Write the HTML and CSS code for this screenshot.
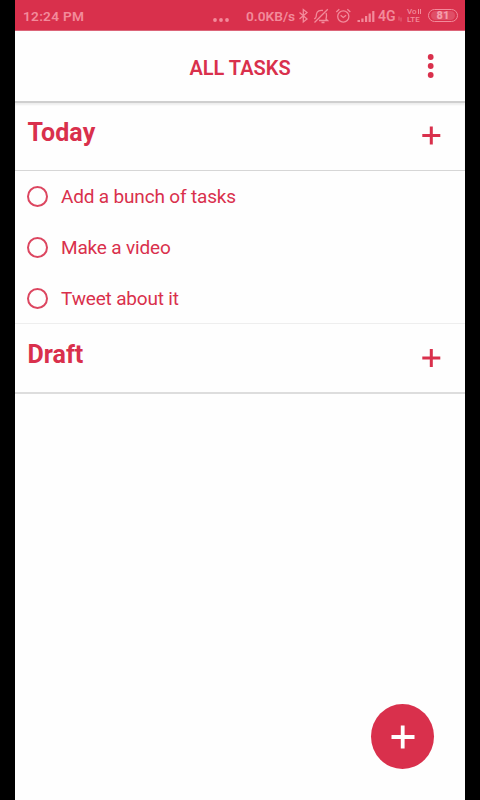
FILE: index.html
```html
<!DOCTYPE html>
<html lang="en">
<head>
<meta charset="utf-8">
<meta name="viewport" content="width=device-width, initial-scale=1">
<title>All Tasks</title>
<link rel="stylesheet" href="styles.css">
</head>
<body>
<div class="phone">
  <div class="status">
    <span class="time">12:24 PM</span>
    <svg class="dots" width="16" height="4" viewBox="0 0 16 4" fill="currentColor"><circle cx="2" cy="2" r="1.9"/><circle cx="8" cy="2" r="1.9"/><circle cx="14" cy="2" r="1.9"/></svg>
    <span class="speed">0.0KB/s</span>
    <svg width="11" height="16" viewBox="0 0 11 16" fill="none" stroke="currentColor" stroke-width="1.3"><path d="M1.500 4.500 9 11 5.300 14V1.500L9 4.500 1.500 11"/></svg>
    <svg class="bell" width="16" height="16" viewBox="0 0 16 16" fill="none" stroke="currentColor" stroke-width="1.3"><path d="M1.500 14.500 14.800 1.200M3 9.500l.5-3.500C4 3 7 1.800 10 2.500M3 9.500 1.300 11M13 5c1 2 .5 4 0 6l1.500 1.500H6M8.500 14.500h3"/></svg>
    <svg class="alarm" width="16" height="16" viewBox="0 0 16 16" fill="none" stroke="currentColor" stroke-width="1.3"><circle cx="8.300" cy="8.500" r="5.600"/><path d="M1.300 4 4.300 1.300M12.300 1.300 15.300 4M5.600 7.300 8.300 9.500l2.800-2.200"/></svg>
    <svg class="signal" width="18" height="13" viewBox="0 0 18 13" fill="currentColor"><path d="M.5 10H3v2H.5ZM4.300 8.500h2.200V12H4.300ZM8 6h2.200v6H8ZM11.600 3.500h2.200V12h-2.200ZM15.200 1h2.200v11h-2.200Z"/></svg>
    <span class="net">4G</span>
    <svg class="data" width="4" height="6" viewBox="0 0 4 6" fill="none" stroke="currentColor" stroke-width="1"><path d="M1 .5v4M3 1.500v4"/></svg>
    <span class="volte"><span class="vo">Vo<i></i><i></i></span><span>LTE</span></span>
    <span class="battery"><b>81</b></span>
  </div>
  <header class="header">
    <h1>ALL TASKS</h1>
    <svg class="menu" width="8" height="24" viewBox="0 0 8 24" fill="currentColor"><circle cx="3.700" cy="3" r="2.900"/><circle cx="3.700" cy="12" r="2.900"/><circle cx="3.700" cy="21" r="2.900"/></svg>
  </header>
  <main>
    <section>
      <div class="group today">
        <h2>Today</h2>
        <svg class="plus" width="20" height="20" viewBox="0 0 20 20" stroke="currentColor" stroke-width="3"><path d="M10.300 1.500v18M1.300 10.500h18"/></svg>
      </div>
      <ul>
        <li><span class="check"></span><span class="label">Add a bunch of tasks</span></li>
        <li><span class="check"></span><span class="label">Make a video</span></li>
        <li><span class="check"></span><span class="label">Tweet about it</span></li>
      </ul>
    </section>
    <section>
      <div class="group draft">
        <h2>Draft</h2>
        <svg class="plus" width="20" height="20" viewBox="0 0 20 20" stroke="currentColor" stroke-width="3"><path d="M10.300 1v18M1.300 10h18"/></svg>
      </div>
    </section>
  </main>
  <button class="fab" aria-label="Add"><svg width="24" height="24" viewBox="0 0 24 24" stroke="currentColor" stroke-width="3.800"><path d="M11.700 .5v23M.5 12h23"/></svg></button>
</div>
</body>
</html>
```

FILE: styles.css
```css
* { box-sizing: border-box; }
body { margin: 0; background: #000; color: #d9304c; font-family: Roboto, sans-serif; }
svg { display: block; flex: none; }
.phone { position: relative; width: 450px; height: 800px; margin: 0 auto; background: #fefefe; overflow: hidden; }
.status {
  display: grid;
  grid-template-columns: 190px 33px 52px 15px 22px 22px 21px 20px 9px 21px 30px;
  align-items: center;
  height: 31px;
  padding: 2px 0 0 8px;
  background: #d9304c;
  color: #f28b9b;
  font-size: 13.700px;
  font-weight: 600;
  line-height: 16px;
  white-space: nowrap;
  border-bottom: 1px solid #dc6579;
}
.time { letter-spacing: .25px; }
.dots { margin-top: 7px; }
.net { font-size: 14px; }
.data { margin-top: 6px; opacity: .6; }
.volte { display: flex; flex-direction: column; font-size: 8px; font-weight: 500; }
.volte span { display: block; height: 8px; line-height: 8px; }
.volte i { display: inline-block; width: 1px; height: 5px; margin-left: 1px; background: currentColor; }
.battery {
  display: flex; align-items: center; justify-content: center;
  width: 30px; height: 13px; padding: 1px; margin-top: -1px;
  border: 1px solid currentColor; border-radius: 7px;
  font-size: 11px; line-height: 9px;
}
.battery b { width: 24px; height: 9px; border-radius: 5px; background: #df4e66; color: #f59dab; text-align: center; }
.header { position: relative; display: flex; align-items: center; justify-content: center; height: 70px; padding-top: 3px; }
.header h1 { margin: 0; font-size: 20px; line-height: 24px; font-weight: 600; }
.menu { position: absolute; left: 412px; top: 23px; }
.group { display: flex; justify-content: space-between; height: 70px; padding: 17px 24px 0 12.500px; border-bottom: 1px solid #d6d6d6; }
.today { border-top: 2px solid #cfcfcf; box-shadow: inset 0 2px 2px #eeeeee; padding-top: 15px; }
.draft { height: 71px; border-top: 1px solid #eeeeee; border-bottom: 2px solid #dddddd; padding-top: 16px; }
h2 { margin: 0; font-size: 25px; line-height: 30px; font-weight: 700; }
.today h2 { letter-spacing: .1px; }
.plus { margin-top: 7px; }
.draft .plus { margin-top: 8px; }
ul { height: 152px; margin: 0; padding: 0; list-style: none; }
li { display: flex; align-items: center; height: 51px; padding-left: 12px; }
.check { width: 21px; height: 21px; margin-right: 13px; border: 2px solid #dc4660; border-radius: 50%; }
.label { font-size: 19px; line-height: 24px; letter-spacing: -.17px; }
.fab {
  position: absolute; left: 356px; top: 704px;
  display: flex; align-items: center; justify-content: center;
  width: 63px; height: 65px; padding: 0; border: 0; border-radius: 50%;
  background: #d9304c; color: #fff;
}
```
